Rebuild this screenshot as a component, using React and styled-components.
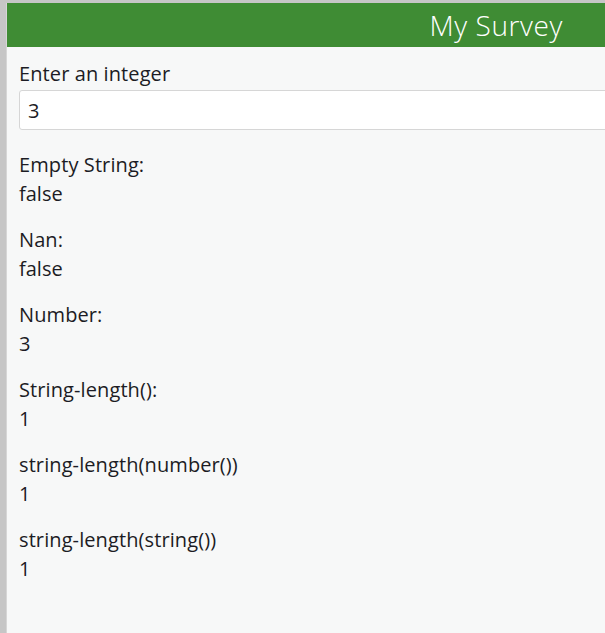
import React, { useState } from 'react';
import styled, { createGlobalStyle } from 'styled-components';

const GlobalStyle = createGlobalStyle`
  html, body {
    margin: 0;
    padding: 0;
    background: #c6c6c6;
    overflow: hidden;
  }
  body {
    font-family: "Open Sans", Lato, "Liberation Sans", sans-serif;
  }
`;

const Frame = styled.div`
  margin: 3px 0 0 6px;
  width: 610px;
  min-height: 630px;
  background: #f7f8f8;
  border-left: 1px solid #d6d6d6;
`;

const Header = styled.header`
  height: 44px;
  background: #3f8c34;
  display: flex;
  align-items: center;
  justify-content: flex-end;
  padding-right: 54px;
`;

const Title = styled.h1`
  margin: 0;
  color: #ffffff;
  font-size: 28px;
  font-weight: 300;
  letter-spacing: 0.6px;
`;

const Content = styled.main`
  padding: 12px 0 0 12px;
  display: flex;
  flex-direction: column;
`;

const Question = styled.div`
  display: flex;
  flex-direction: column;
  margin-bottom: ${(props) => props.gap || '17px'};
`;

const Label = styled.div`
  font-size: 20px;
  line-height: 29px;
  letter-spacing: 0.1px;
  color: #1c1c24;
`;

const Value = styled.div`
  font-size: 20px;
  line-height: 29px;
  color: #1c1c24;
`;

const Input = styled.input`
  box-sizing: border-box;
  height: 40px;
  width: 100%;
  margin-top: 2px;
  padding: 0 8px;
  border: 1px solid #d6d6d6;
  border-radius: 3px;
  background: #ffffff;
  font-family: inherit;
  font-size: 20px;
  color: #1c1c24;
  outline: none;
`;

const results = [
  { label: 'Empty String:', value: 'false' },
  { label: 'Nan:', value: 'false' },
  { label: 'Number:', value: '3' },
  { label: 'String-length():', value: '1' },
  { label: 'string-length(number())', value: '1' },
  { label: 'string-length(string())', value: '1' },
];

const App = () => {
  const [text, setText] = useState('3');

  return (
    <>
      <GlobalStyle />
      <Frame>
        <Header>
          <Title>My Survey</Title>
        </Header>
        <Content>
          <Question gap="20px">
            <Label>Enter an integer</Label>
            <Input value={text} onChange={(e) => setText(e.target.value)} />
          </Question>
          {results.map((item) => (
            <Question key={item.label}>
              <Label>{item.label}</Label>
              <Value>{item.value}</Value>
            </Question>
          ))}
        </Content>
      </Frame>
    </>
  );
};

export default App;
